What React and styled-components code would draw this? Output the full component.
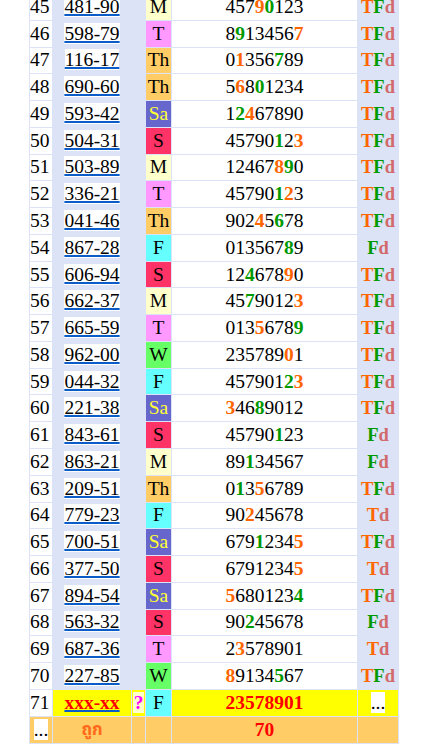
import React from "react";
import styled, { createGlobalStyle } from "styled-components";

const Global = createGlobalStyle`
  html, body { margin: 0; padding: 0; background: #fff; }
  body { font-family: "Liberation Serif", "Times New Roman", serif; }
`;

const LAV = "#dce3f6";

const dayColors = {
  M: { bg: "#ffffcc", fg: "#000" },
  T: { bg: "#ff99ff", fg: "#000" },
  Th: { bg: "#ffcc66", fg: "#000" },
  Sa: { bg: "#6666cc", fg: "#ffff33" },
  S: { bg: "#ff3366", fg: "#000" },
  W: { bg: "#66ff66", fg: "#000" },
  F: { bg: "#66ffff", fg: "#000" },
};

const rows = [
  [45, "481-90", "M", "45790123"],
  [46, "598-79", "T", "89134567"],
  [47, "116-17", "Th", "01356789"],
  [48, "690-60", "Th", "56801234"],
  [49, "593-42", "Sa", "12467890"],
  [50, "504-31", "S", "45790123"],
  [51, "503-89", "M", "12467890"],
  [52, "336-21", "T", "45790123"],
  [53, "041-46", "Th", "90245678"],
  [54, "867-28", "F", "01356789"],
  [55, "606-94", "S", "12467890"],
  [56, "662-37", "M", "45790123"],
  [57, "665-59", "T", "01356789"],
  [58, "962-00", "W", "23578901"],
  [59, "044-32", "F", "45790123"],
  [60, "221-38", "Sa", "34689012"],
  [61, "843-61", "S", "45790123"],
  [62, "863-21", "M", "89134567"],
  [63, "209-51", "Th", "01356789"],
  [64, "779-23", "F", "90245678"],
  [65, "700-51", "Sa", "67912345"],
  [66, "377-50", "S", "67912345"],
  [67, "894-54", "Sa", "56801234"],
  [68, "563-32", "S", "90245678"],
  [69, "687-36", "T", "23578901"],
  [70, "227-85", "W", "89134567"],
];

const Table = styled.table`
  margin: -7px 0 0 29px;
  border-collapse: separate;
  border-spacing: 1px;
  background: ${LAV};
  table-layout: fixed;
  width: 370px;
  font-family: "Liberation Serif", "Times New Roman", serif;
  font-size: 19.5px;
  color: #000;
`;

const Col = styled.col`
  width: ${(p) => p.$w}px;
`;

const Row = styled.tr`
  height: 25.77px;
`;

const Cell = styled.td`
  padding: 0;
  height: 25.77px;
  text-align: ${(p) => p.$align || "center"};
  vertical-align: middle;
  white-space: nowrap;
  overflow: hidden;
  background: ${(p) => p.$bg || "transparent"};
  color: ${(p) => p.$fg || "#000"};
  font-weight: ${(p) => (p.$bold ? "bold" : "normal")};
  line-height: normal;
`;

const Code = styled.span`
  background: ${(p) => (p.$plain ? "transparent" : "#fff")};
  color: ${(p) => p.$color || "#000"};
  font-weight: ${(p) => (p.$bold ? "bold" : "normal")};
  text-decoration: underline;
  text-decoration-color: #0a5cc8;
  text-decoration-thickness: 1.5px;
`;

const Digit = styled.span`
  color: ${(p) => p.$c || "#000"};
  font-weight: ${(p) => (p.$c ? "bold" : "normal")};
`;

const Flags = styled.span`
  font-size: 18.5px;
  font-weight: bold;
`;

const Flag = styled.span`
  color: ${(p) => p.$c};
`;

const Ask = styled.span`
  background: #ffffcc;
  color: #ff00ff;
  font-weight: bold;
  padding: 0 0.5px;
`;

const Dots = styled.span`
  background: #fff;
  color: #000;
  font-weight: normal;
`;

const Thai = styled.span`
  font-family: "Noto Sans Thai", "Noto Sans", "DejaVu Sans", sans-serif;
  font-size: 17px;
  font-weight: bold;
  color: #ff6a1a;
`;

const ORANGE = "#ff6600";
const GREEN = "#009900";
const ROSE = "#d16a6a";

function DigitString({ digits, code }) {
  const tens = code[4];
  const units = code[5];
  return (
    <>
      {digits.split("").map((d, i) => {
        let c = null;
        if (d === tens) c = ORANGE;
        else if (d === units) c = GREEN;
        return (
          <Digit key={i} $c={c}>
            {d}
          </Digit>
        );
      })}
    </>
  );
}

function FlagCell({ digits, code }) {
  const hasT = digits.includes(code[4]);
  const hasF = digits.includes(code[5]);
  return (
    <Flags>
      {hasT && <Flag $c={ORANGE}>T</Flag>}
      {hasF && <Flag $c={GREEN}>F</Flag>}
      <Flag $c={ROSE}>d</Flag>
    </Flags>
  );
}

export default function App() {
  return (
    <>
      <Global />
      <Table>
        <colgroup>
          <Col $w={22} />
          <Col $w={78} />
          <Col $w={13} />
          <Col $w={25} />
          <Col $w={185} />
          <Col $w={40} />
        </colgroup>
        <tbody>
          {rows.map(([n, code, day, digits]) => (
            <Row key={n}>
              <Cell $bg="#fff" $align="left">{n}</Cell>
              <Cell>
                <Code>{code}</Code>
              </Cell>
              <Cell />
              <Cell $bg={dayColors[day].bg} $fg={dayColors[day].fg}>
                {day}
              </Cell>
              <Cell $bg="#fff">
                <DigitString digits={digits} code={code} />
              </Cell>
              <Cell>
                <FlagCell digits={digits} code={code} />
              </Cell>
            </Row>
          ))}
          <Row>
            <Cell $bg="#fff" $align="left">71</Cell>
            <Cell $bg="#ffff00">
              <Code $plain $bold $color="#ff0000">xxx-xx</Code>
            </Cell>
            <Cell $bg="#ffff00">
              <Ask>?</Ask>
            </Cell>
            <Cell $bg={dayColors.F.bg}>F</Cell>
            <Cell $bg="#ffff00" $fg="#ff0000" $bold>
              23578901
            </Cell>
            <Cell $bg="#ffff00">
              <Dots>...</Dots>
            </Cell>
          </Row>
          <Row>
            <Cell $bg="#ffcc66">
              <Dots>...</Dots>
            </Cell>
            <Cell $bg="#ffcc66">
              <Thai>ถูก</Thai>
            </Cell>
            <Cell $bg="#ffcc66" />
            <Cell $bg="#ffcc66" />
            <Cell $bg="#ffcc66" $fg="#ff0000" $bold>
              70
            </Cell>
            <Cell $bg="#ffcc66" />
          </Row>
        </tbody>
      </Table>
    </>
  );
}
